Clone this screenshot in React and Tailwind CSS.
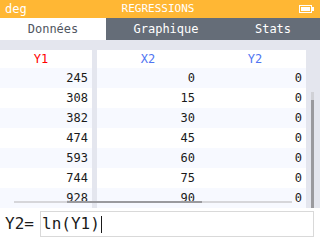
const y1 = [245, 308, 382, 474, 593, 744, 928];
const x2 = [0, 15, 30, 45, 60, 75, 90];
const y2 = [0, 0, 0, 0, 0, 0, 0];

function Column({ width, line, label, labelColor, values, labelPad }) {
  return (
    <div className={`flex flex-col ${width}`}>
      <div className={`h-[2px] ${line}`} />
      <div className={`flex h-[18px] items-center justify-center bg-white ${labelColor} ${labelPad}`}>{label}</div>
      {values.map((v, i) => (
        <div
          key={i}
          className={`flex h-[20px] shrink-0 items-center justify-end pr-[4px] text-[#1a1a1a] ${i % 2 === 0 ? "bg-[#f7f9ff]" : "bg-white"}`}
        >
          {v}
        </div>
      ))}
    </div>
  );
}

export default function App() {
  return (
    <div className="flex h-[240px] w-[320px] flex-col overflow-hidden bg-white font-['DejaVu_Sans_Mono',monospace] text-[12px]">
      <div className="flex h-[18px] items-center bg-[#ffb734] px-[5px] text-white">
        <span className="w-[40px] text-[12px]">deg</span>
        <span className="flex-1 pr-[4px] text-center text-[11px]">REGRESSIONS</span>
        <div className="flex w-[40px] items-center justify-end pr-[1px]">
          <div className="h-[8px] w-[13px] border border-white p-[1px]">
            <div className="h-full w-full bg-white" />
          </div>
          <div className="h-[4px] w-[2px] bg-white" />
        </div>
      </div>

      <div className="flex h-[22px] bg-[#656d78] text-white">
        <div className="flex w-[106px] items-center justify-center bg-white text-[#505661]">Données</div>
        <div className="flex w-[120px] items-center justify-center">Graphique</div>
        <div className="flex flex-1 items-center justify-center">Stats</div>
      </div>

      <div className="relative flex h-[168px] overflow-hidden bg-[#e4e6ee] pt-[10px]">
        <Column width="w-[92px]" line="bg-[#ff0000]" label="Y1" labelColor="text-[#ff0000]" labelPad="pr-[10px]" values={y1} />
        <div className="w-[5px]" />
        <Column width="w-[102px]" line="bg-[#5075f2]" label="X2" labelColor="text-[#5075f2]" labelPad="" values={x2} />
        <Column width="w-[107px]" line="bg-[#5075f2]" label="Y2" labelColor="text-[#5075f2]" labelPad="pl-[5px]" values={y2} />

        <div className="absolute left-[311px] top-[52px] h-[138px] w-[3px] bg-[#d0d1d6]" />
        <div className="absolute left-[311px] top-[60px] h-[120px] w-[3px] bg-[#9a9a9e]" />
        <div className="absolute left-[14px] top-[161px] h-[2px] w-[278px] bg-[#d6d6da]" />
        <div className="absolute left-[67px] top-[161px] h-[2px] w-[135px] bg-[#9a9a9e]" />
      </div>

      <div className="flex flex-1 items-center pl-[5px] pr-[6px]">
        <span className="w-[35px] text-[16px] text-[#1a1a1a]">Y2=</span>
        <div className="flex h-[26px] flex-1 items-center border border-[#d9d9d9] pl-[1px] text-[16px] text-[#1a1a1a]">
          <span>ln(Y1)</span>
          <span className="ml-[1px] h-[17px] w-[1px] bg-[#1a1a1a]" />
        </div>
      </div>
    </div>
  );
}
